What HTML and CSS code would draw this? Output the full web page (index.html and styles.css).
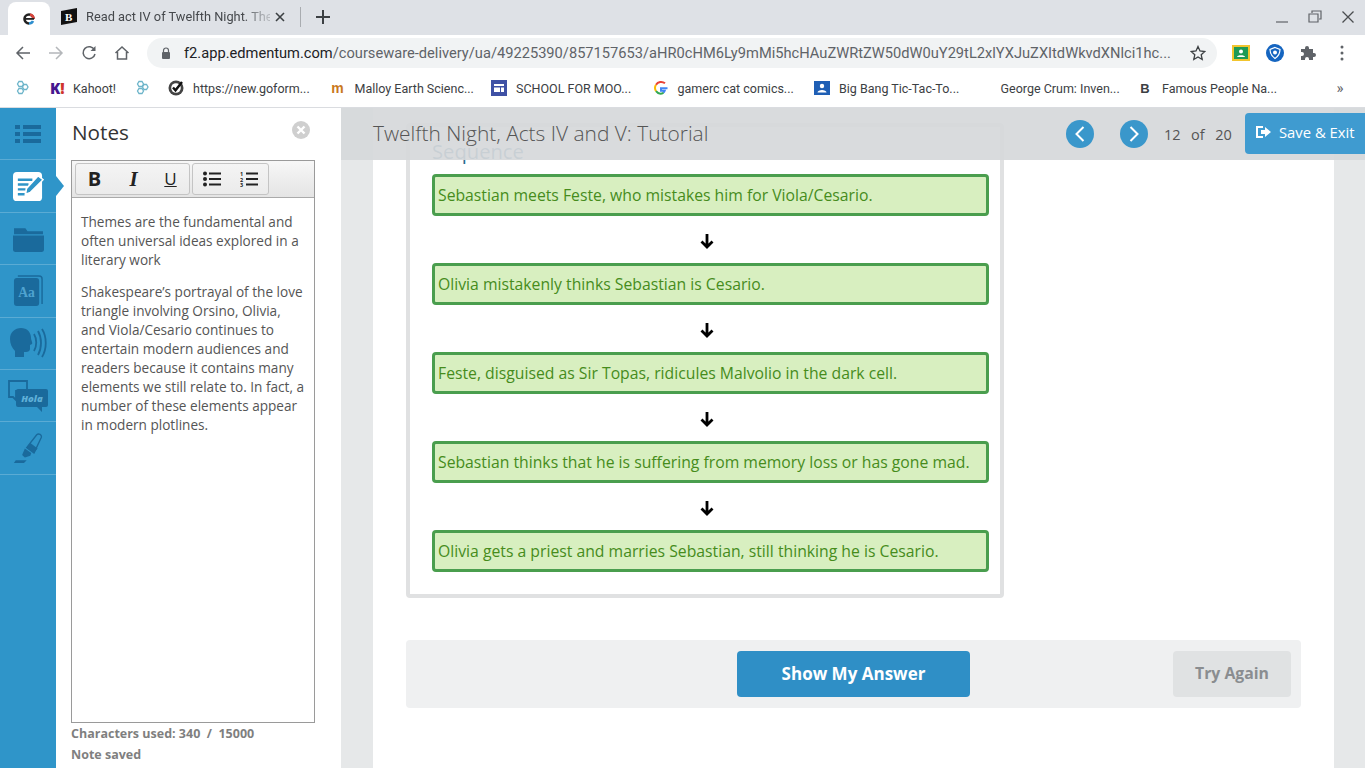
FILE: index.html
```html
<!DOCTYPE html>
<html lang="en">
<head>
<meta charset="utf-8">
<title>Twelfth Night, Acts IV and V: Tutorial</title>
<link rel="stylesheet" href="styles.css">
</head>
<body>
<header class="chrome">
  <div class="tabbar">
    <div class="tab-active">
      <svg class="fav" viewBox="0 0 16 16"><path d="M3.500 8a4.500 4.500 0 0 1 9 0" stroke="#222" stroke-width="2.600" fill="none"/><path d="M9 3.500a4.500 4.500 0 0 1 3.500 4.500" stroke="#d9433a" stroke-width="2.600" fill="none"/><path d="M3.500 8a4.500 4.500 0 0 0 4.500 4.500" stroke="#222" stroke-width="2.600" fill="none"/><path d="M8 12.500a4.500 4.500 0 0 0 4-2.500" stroke="#2f8fcf" stroke-width="2.600" fill="none"/><rect x="4" y="7" width="9" height="1.800" fill="#222"/></svg>
    </div>
    <div class="tab">
      <svg class="fav" viewBox="0 0 18 18"><path d="M1 3 17 0v14L1 17z" fill="#111"/><text x="5" y="13" class="fav-b">B</text></svg>
      <span class="tab-title">Read act IV of Twelfth Night. The</span>
      <svg class="tab-x" viewBox="0 0 10 10"><path d="M1 1l8 8M9 1l-8 8" stroke="#3c4043" stroke-width="1.600"/></svg>
    </div>
    <span class="tab-sep"></span>
    <svg class="tab-plus" viewBox="0 0 14 14"><path d="M7 0v14M0 7h14" stroke="#3c4043" stroke-width="2"/></svg>
    <div class="win">
      <svg viewBox="0 0 14 14"><path d="M1 12h12" stroke="#5f6368" stroke-width="1.200"/></svg>
      <svg viewBox="0 0 14 14"><path d="M4 3V1h9v8h-2M1 4h9v8H1z" stroke="#5f6368" stroke-width="1.200" fill="none"/></svg>
      <svg viewBox="0 0 14 14"><path d="M1.500 1.500l11 11M12.500 1.500l-11 11" stroke="#4a4d50" stroke-width="1.300"/></svg>
    </div>
  </div>
  <div class="toolbar">
    <svg class="tb" viewBox="0 0 16 16"><path d="M15 8H2M8 2 2 8l6 6" stroke="#5f6368" stroke-width="1.500" fill="none"/></svg>
    <svg class="tb" viewBox="0 0 16 16"><path d="M1 8h13M8 2l6 6-6 6" stroke="#b4b7ba" stroke-width="1.500" fill="none"/></svg>
    <svg class="tb" viewBox="0 0 16 16"><path d="M13.500 5A6 6 0 1 0 14 9" stroke="#5f6368" stroke-width="1.500" fill="none"/><path d="M14.500 1v5h-5z" fill="#5f6368"/></svg>
    <svg class="tb" viewBox="0 0 16 16"><path d="M1.500 8 8 2l6.500 6M3.500 7v7h9V7" stroke="#5f6368" stroke-width="1.500" fill="none"/></svg>
    <div class="omni">
      <svg class="lock" viewBox="0 0 10 12"><path d="M2.500 5V3.500a2.500 2.500 0 0 1 5 0V5" stroke="#5f6368" stroke-width="1.200" fill="none"/><rect x="1" y="5" width="8" height="7" rx="1" fill="#5f6368"/></svg>
      <span class="url"><span class="url-host">f2.app.edmentum.com</span>/courseware-delivery/ua/49225390/857157653/aHR0cHM6Ly9mMi5hcHAuZWRtZW50dW0uY29tL2xlYXJuZXItdWkvdXNlci1hc...</span>
      <svg class="star" viewBox="0 0 16 16"><path d="M8 1.500 10 6l4.800.5-3.600 3.200 1 4.800L8 12l-4.200 2.500 1-4.800L1.200 6.500 6 6z" stroke="#3c4043" stroke-width="1.300" fill="none"/></svg>
    </div>
    <svg class="ext ext-class" viewBox="0 0 18 16"><rect width="18" height="16" fill="#f2c52e"/><rect x="2" y="2" width="14" height="12" fill="#1e9a55"/><circle cx="9" cy="6.500" r="2" fill="#fff"/><path d="M5 12c0-2.500 8-2.500 8 0z" fill="#fff"/></svg>
    <svg class="ext ext-shield" viewBox="0 0 18 18"><circle cx="9" cy="9" r="9" fill="#1565c0"/><path d="M9 3.500 14 5.500c0 4-2 7-5 9-3-2-5-5-5-9z" fill="none" stroke="#fff" stroke-width="1.200"/><circle cx="9" cy="8.500" r="2" fill="#fff"/></svg>
    <svg class="ext ext-puzzle" viewBox="0 0 16 16"><path d="M1 4h4V3a2 2 0 0 1 4 0v1h4v4h1a2 2 0 0 1 0 4h-1v3H9v-1a2 2 0 0 0-4 0v1H1v-4h1a2 2 0 0 0 0-4H1z" fill="#5f6368"/></svg>
    <svg class="ext ext-menu" viewBox="0 0 4 16"><circle cx="2" cy="2" r="1.500" fill="#5f6368"/><circle cx="2" cy="8" r="1.500" fill="#5f6368"/><circle cx="2" cy="14" r="1.500" fill="#5f6368"/></svg>
  </div>
  <nav class="bookmarks">
    <svg class="bm-icon bm-first" viewBox="0 0 16 16"><g fill="none" stroke="#6db5ca" stroke-width="1.300"><path d="M5 1.500h3l1.500 2.500L8 6.500H5L3.500 4z"/><path d="M10 4.500h2.500l1.500 2.500L12.500 9.500H10L8.500 7z"/><path d="M5 8.500h3l1.500 2.500L8 13.500H5L3.500 11z"/></g></svg>
    <div class="bm bm-kahoot"><span class="bm-k">K<span class="bm-bang">!</span></span><span class="bm-label bm-label-tight">Kahoot!</span></div>
    <svg class="bm-icon bm-hex" viewBox="0 0 16 16"><g fill="none" stroke="#6db5ca" stroke-width="1.300"><path d="M5 1.500h3l1.500 2.500L8 6.500H5L3.500 4z"/><path d="M10 4.500h2.500l1.500 2.500L12.500 9.500H10L8.500 7z"/><path d="M5 8.500h3l1.500 2.500L8 13.500H5L3.500 11z"/></g></svg>
    <div class="bm"><svg class="bm-icon" viewBox="0 0 16 16"><circle cx="8" cy="8" r="7.500" fill="#444"/><circle cx="8" cy="8" r="4.800" fill="#fff"/><path d="M5 7.500l2.500 2.800L14 2" stroke="#111" stroke-width="2.400" fill="none"/></svg><span class="bm-label">https://new.goform...</span></div>
    <div class="bm"><span class="bm-mh"><span class="mh-m">m</span></span><span class="bm-label">Malloy Earth Scienc...</span></div>
    <div class="bm"><svg class="bm-icon" viewBox="0 0 16 16"><rect width="16" height="16" fill="#3f51a5"/><path d="M3 4h10v2H3zM3 7.500h6V12H3zM10 7.500h3V12h-3z" fill="#fff"/></svg><span class="bm-label">SCHOOL FOR MOO...</span></div>
    <div class="bm"><svg class="bm-icon" viewBox="0 0 16 16"><path d="M14.500 8.200H8v2.500h3.700a4 4 0 0 1-1.500 2" stroke="#4285f4" stroke-width="2" fill="none"/><path d="M12 3.300A6 6 0 0 0 3 4.800" stroke="#ea4335" stroke-width="2" fill="none"/><path d="M3 4.800a6 6 0 0 0 0 6.400" stroke="#fbbc05" stroke-width="2" fill="none"/><path d="M3 11.200a6 6 0 0 0 7.500 1.700" stroke="#34a853" stroke-width="2" fill="none"/></svg><span class="bm-label">gamerc cat comics...</span></div>
    <div class="bm"><svg class="bm-icon" viewBox="0 0 16 16"><rect width="16" height="14" y="1" fill="#1f5fb5"/><circle cx="8" cy="6" r="2.200" fill="#fff"/><path d="M3.500 12.500c0-3.500 9-3.500 9 0z" fill="#fff"/></svg><span class="bm-label">Big Bang Tic-Tac-To...</span></div>
    <div class="bm"><span class="bm-icon"></span><span class="bm-label">George Crum: Inven...</span></div>
    <div class="bm"><span class="bm-b">B</span><span class="bm-label">Famous People Na...</span></div>
    <span class="bm-more">»</span>
  </nav>
</header>

<div class="app">
  <aside class="rail">
    <div class="rail-item">
      <svg class="rail-icon" viewBox="0 0 26 20"><path d="M0 1h5v4H0zM8 1h18v4H8zM0 8h5v4H0zM8 8h18v4H8zM0 15h5v4H0zM8 15h18v4H8z" fill="#1a6a9c"/></svg>
    </div>
    <div class="rail-item rail-active">
      <svg class="rail-icon-lg" viewBox="0 0 32 32"><rect y="1" width="30" height="30" rx="4" fill="#fff"/><path d="M5 9h15M5 14h11M5 19h8M5 24h7" stroke="#2f95c8" stroke-width="2.500"/><path d="M13 24l1-6L26 5l5 4-13 13z" fill="#2f95c8" stroke="#fff" stroke-width="1.500"/></svg>
    </div>
    <div class="rail-item">
      <svg class="rail-icon-lg" viewBox="0 0 30 26"><path d="M1 3h11l2 3h15v3H1z" fill="#1a6a9c"/><path d="M0 10h30v14a2 2 0 0 1-2 2H2a2 2 0 0 1-2-2z" fill="#1a6a9c"/></svg>
    </div>
    <div class="rail-item">
      <svg class="rail-icon-lg" viewBox="0 0 30 32"><path d="M4 1h22a3 3 0 0 1 3 3v26" fill="none" stroke="#1a6a9c" stroke-width="1.500"/><rect y="3" width="26" height="29" rx="3" fill="#1a6a9c"/><text x="13" y="23" class="book-text">Aa</text></svg>
    </div>
    <div class="rail-item">
      <svg class="rail-icon-xl" viewBox="0 0 38 30"><path d="M1 11C1 4 6 0 12 0s10 4 10 10c0 2 2 5 1 6l-2 1v4c0 2-2 3-4 3h-2v5H6v-6C3 20 1 16 1 11z" fill="#1a6a9c"/><path d="M25 6c3 5 3 12 0 17M29 3c4 7 4 17 0 24M33 1c5 8 5 20 0 28" fill="none" stroke="#1a6a9c" stroke-width="1.800"/></svg>
    </div>
    <div class="rail-item">
      <svg class="rail-icon-xl rail-hola" viewBox="0 0 40 32"><path d="M1 1h18v10H8v9l-3-3H1z" fill="none" stroke="#1a6a9c" stroke-width="1.800"/><path d="M10 9h28a2 2 0 0 1 2 2v14a2 2 0 0 1-2 2h-4v5l-5-5H10a2 2 0 0 1-2-2V11a2 2 0 0 1 2-2z" fill="#1a6a9c"/><text x="24" y="22" class="hola-text">Hola</text></svg>
    </div>
    <div class="rail-item">
      <svg class="rail-icon-lg" viewBox="0 0 32 34"><path d="M0 33h11l3-3H2z" fill="#1a6a9c"/><path d="M12 27l-3-3 3-7 7 5-1 3z" fill="#1a6a9c"/><path d="M14 16 25 2a3 3 0 0 1 5 3L22 22z" fill="none" stroke="#1a6a9c" stroke-width="1.500"/><path d="M14 16l4-5 8 6-4 5z" fill="#1a6a9c"/></svg>
    </div>
  </aside>

  <section class="notes">
    <div class="notes-head">
      <h2 class="notes-title">Notes</h2>
      <svg class="notes-close" viewBox="0 0 18 18"><circle cx="9" cy="9" r="9" fill="#cfcfcf"/><path d="M5.500 5.500l7 7M12.500 5.500l-7 7" stroke="#fff" stroke-width="2.400"/></svg>
    </div>
    <div class="editor">
      <div class="editor-bar">
        <div class="btn-group group-a">
          <span class="ed-btn ed-b">B</span>
          <span class="ed-btn ed-i">I</span>
          <span class="ed-btn ed-u">U</span>
        </div>
        <div class="btn-group group-b">
          <span class="ed-btn"><svg class="ed-svg" viewBox="0 0 18 16"><circle cx="2" cy="2.500" r="2" fill="#222"/><circle cx="2" cy="8" r="2" fill="#222"/><circle cx="2" cy="13.500" r="2" fill="#222"/><path d="M6 2.500h12M6 8h12M6 13.500h12" stroke="#222" stroke-width="1.800"/></svg></span>
          <span class="ed-btn"><svg class="ed-svg" viewBox="0 0 18 16"><text x="0" y="5" class="ol-num">1</text><text x="0" y="10.500" class="ol-num">2</text><text x="0" y="16" class="ol-num">3</text><path d="M6 2.500h12M6 8h12M6 13.500h12" stroke="#222" stroke-width="1.800"/></svg></span>
        </div>
      </div>
      <div class="editor-body">
        <p>Themes are the fundamental and often universal ideas explored in a literary work</p>
        <p>Shakespeare’s portrayal of the love triangle involving Orsino, Olivia, and Viola/Cesario continues to entertain modern audiences and readers because it contains many elements we still relate to. In fact, a number of these elements appear in modern plotlines.</p>
      </div>
    </div>
    <div class="notes-meta">Characters used: 340&nbsp; /&nbsp; 15000</div>
    <div class="notes-meta notes-saved">Note saved</div>
  </section>

  <main class="stage">
    <div class="lesson-bar">
      <h1 class="lesson-title">Twelfth Night, Acts IV and V: Tutorial</h1>
      <div class="lesson-nav">
        <span class="nav-btn"><svg viewBox="0 0 12 18"><path d="M9.500 2 2.500 9l7 7" stroke="#fff" stroke-width="2" fill="none"/></svg></span>
        <span class="nav-btn"><svg viewBox="0 0 12 18"><path d="M2.500 2l7 7-7 7" stroke="#fff" stroke-width="2" fill="none"/></svg></span>
        <span class="pager"><span>12</span><span>of</span><span>20</span></span>
        <span class="save-btn"><svg class="save-icon" viewBox="0 0 16 14"><path d="M1 1h7v2H3v8h5v2H1z" fill="#fff"/><path d="M6 5h4V2l6 5-6 5V9H6z" fill="#fff"/></svg>Save &amp; Exit</span>
      </div>
    </div>
    <div class="sheet">
      <div class="card">
        <h3 class="seq-title">Sequence</h3>
        <div class="seq-item">Sebastian meets Feste, who mistakes him for Viola/Cesario.</div>
        <div class="seq-arrow"><svg viewBox="0 0 14 16"><path d="M7 1v13M1.500 8.500 7 14l5.500-5.500" stroke="#000" stroke-width="2.800" fill="none"/></svg></div>
        <div class="seq-item">Olivia mistakenly thinks Sebastian is Cesario.</div>
        <div class="seq-arrow"><svg viewBox="0 0 14 16"><path d="M7 1v13M1.500 8.500 7 14l5.500-5.500" stroke="#000" stroke-width="2.800" fill="none"/></svg></div>
        <div class="seq-item">Feste, disguised as Sir Topas, ridicules Malvolio in the dark cell.</div>
        <div class="seq-arrow"><svg viewBox="0 0 14 16"><path d="M7 1v13M1.500 8.500 7 14l5.500-5.500" stroke="#000" stroke-width="2.800" fill="none"/></svg></div>
        <div class="seq-item">Sebastian thinks that he is suffering from memory loss or has gone mad.</div>
        <div class="seq-arrow"><svg viewBox="0 0 14 16"><path d="M7 1v13M1.500 8.500 7 14l5.500-5.500" stroke="#000" stroke-width="2.800" fill="none"/></svg></div>
        <div class="seq-item">Olivia gets a priest and marries Sebastian, still thinking he is Cesario.</div>
      </div>
      <div class="actions">
        <button class="btn-show">Show My Answer</button>
        <button class="btn-try">Try Again</button>
      </div>
    </div>
  </main>
</div>
</body>
</html>
```

FILE: styles.css
```css
* { box-sizing: border-box; }
html, body { height: 100%; margin: 0; overflow: hidden; }
body { display: flex; flex-direction: column; font-family: "Open Sans", sans-serif; background: #fff; }
h1, h2, h3, p { margin: 0; font-weight: 400; }

/* browser chrome */
.chrome { flex: none; height: 108px; font-family: Roboto, sans-serif; color: #3c4043; }
.tabbar { height: 35px; padding-bottom: 2px; background: #dee1e6; display: flex; align-items: center; }
.tab-active { width: 42px; height: 33px; margin-left: 8px; margin-top: 2px; background: #fff; border-radius: 8px 8px 0 0; display: flex; align-items: center; justify-content: center; align-self: flex-start; }
.fav { width: 16px; height: 16px; flex: none; }
.fav-b { font: 900 11px "Liberation Serif", serif; fill: #fff; }
.tab { display: flex; align-items: center; width: 240px; padding-left: 10px; }
.tab .fav { width: 18px; height: 18px; }
.tab-title { width: 184px; margin-left: 8px; font-size: 12.800px; white-space: nowrap; overflow: hidden; color: #45484c; -webkit-mask-image: linear-gradient(90deg, #000 85%, rgba(0,0,0,.25) 98%); mask-image: linear-gradient(90deg, #000 85%, rgba(0,0,0,.25) 98%); }
.tab-x { width: 10px; height: 10px; margin-left: 5px; }
.tab-sep { width: 1px; height: 20px; background: #a9acb0; margin-left: 10px; }
.tab-plus { width: 14px; height: 14px; margin-left: 15px; }
.win { margin-left: auto; display: flex; gap: 19px; padding-right: 10px; }
.win svg { width: 14px; height: 14px; }

.toolbar { height: 36px; background: #fff; display: flex; align-items: center; padding-left: 15px; }
.tb { width: 16px; height: 16px; margin-right: 17px; flex: none; }
.omni { width: 1070px; height: 30px; border-radius: 15px; background: #f1f3f4; display: flex; align-items: center; padding-left: 14px; padding-right: 11px; }
.lock { width: 10px; height: 12px; flex: none; }
.url { width: 987px; margin-left: 13px; font-size: 14.670px; color: #5f6368; white-space: nowrap; overflow: hidden; }
.url-host { color: #202124; }
.star { width: 16px; height: 16px; margin-left: auto; flex: none; }
.ext { flex: none; }
.ext-class { width: 18px; height: 16px; margin-left: 15px; }
.ext-shield { width: 18px; height: 18px; margin-left: 16px; }
.ext-puzzle { width: 16px; height: 16px; margin-left: 16px; }
.ext-menu { width: 4px; height: 16px; margin-left: 24px; }

.bookmarks { height: 37px; padding-bottom: 2px; background: #fff; border-bottom: 1px solid #dadce0; display: flex; align-items: center; padding-left: 14px; font-size: 12.500px; }
.bm-icon { width: 16px; height: 16px; flex: none; display: block; }
.bm-first { margin-right: 20px; }
.bm { display: flex; align-items: center; width: 161.500px; flex: none; white-space: nowrap; }
.bm-label { margin-left: 9px; color: #3c4043; }
.bm-label-tight { margin-left: 7px; }
.bm-kahoot { width: 84px; }
.bm-k { width: 16px; min-width: 0; flex: none; font: 800 15px "Open Sans", sans-serif; color: #46178f; white-space: nowrap; }
.bm-bang { color: #d0342c; }
.bm-hex { margin-right: 18px; }
.bm-mh { width: 16px; display: flex; justify-content: center; font: 700 14px "Liberation Sans", sans-serif; }
.mh-m { color: #c9781c; }
.bm-b { width: 16px; text-align: center; font: 700 13px "Liberation Sans", sans-serif; color: #3c4043; }
.bm-more { margin-left: 38px; font-size: 15px; color: #5f6368; }

/* app */
.app { flex: 1; min-height: 0; display: flex; }
.rail { width: 56px; flex: none; background: #2f95c9; }
.rail-item { height: 52.400px; border-bottom: 1px solid #5aabd4; display: flex; align-items: center; justify-content: center; position: relative; }
.rail-icon { width: 26px; height: 20px; }
.rail-icon-lg { width: 31px; height: 31px; }
.rail-icon-xl { width: 38px; height: 32px; }
.rail-hola { width: 40px; }
.rail-active::after { content: ""; position: absolute; left: 56px; top: 16px; border-left: 8px solid #2f95c9; border-top: 10px solid transparent; border-bottom: 10px solid transparent; }
.book-text { font: 700 14px "Liberation Serif", serif; fill: #4fa3d0; text-anchor: middle; }
.hola-text { font: italic 800 9.500px "Open Sans", sans-serif; fill: #5fb0d8; text-anchor: middle; }

.notes { width: 285px; flex: none; padding-left: 15px; background: #fff; display: flex; flex-direction: column; }
.notes-head { height: 52px; display: flex; align-items: flex-start; }
.notes-title { font-size: 20.700px; line-height: 30px; margin-top: 9px; margin-left: 1px; color: #333; }
.notes-close { width: 18px; height: 18px; margin-left: auto; margin-right: 31px; margin-top: 13px; }
.editor { width: 244px; height: 563px; border: 1px solid #9a9a9a; display: flex; flex-direction: column; }
.editor-bar { height: 37px; flex: none; background: linear-gradient(#f7f7f7, #e4e4e4); border-bottom: 1px solid #aaa; display: flex; align-items: flex-start; padding: 2px 0 0 3px; gap: 2px; }
.btn-group { height: 32px; display: flex; border: 1px solid #c4c4c4; border-radius: 3px; background: linear-gradient(#f4f4f4, #ebebeb); }
.group-a { width: 115px; }
.group-b { width: 77px; }
.ed-btn { flex: 1; display: flex; align-items: center; justify-content: center; font-family: "Open Sans", sans-serif; color: #222; }
.ed-b { font-weight: 700; font-size: 20px; padding-right: 2px; line-height: 28px; }
.ed-i { font: italic 700 21px/28px "Liberation Serif", serif; }
.ed-u { font-size: 17px; line-height: 28px; text-decoration: underline; }
.ed-svg { width: 18px; height: 16px; }
.ol-num { font: 700 5.500px "Open Sans", sans-serif; fill: #222; }
.editor-body { flex: 1; padding: 14px 7px 0 9px; font-size: 13.600px; line-height: 19px; color: #555; }
.editor-body p { margin-bottom: 13px; }
.notes-meta { font-size: 12.500px; font-weight: 700; line-height: 20px; color: #7f7f7f; margin-top: 1px; }
.notes-saved { margin-top: 1px; }

/* stage */
.stage { flex: 1; min-width: 0; background: #e6e8e9; position: relative; overflow: hidden; padding-left: 32px; }
.lesson-bar { position: absolute; left: 0; right: 0; top: 0; height: 52px; background: rgba(214, 216, 218, .92); display: flex; align-items: center; padding-left: 32px; z-index: 2; }
.lesson-title { font-size: 20.900px; font-weight: 300; line-height: 28px; margin-top: -3px; color: #555; white-space: nowrap; }
.lesson-nav { margin-left: auto; display: flex; align-items: center; }
.nav-btn { width: 28px; height: 28px; border-radius: 50%; background: #3a97cb; display: flex; align-items: center; justify-content: center; margin-right: 26px; }
.nav-btn svg { width: 12px; height: 18px; }
.pager { display: flex; gap: 10.500px; margin-left: -10px; width: 81px; font-size: 14.500px; color: #555; }
.save-btn { width: 120px; height: 41px; margin-top: -1px; background: #3f9bd0; border-radius: 4px 0 0 4px; color: #fff; font-size: 14.800px; line-height: 20px; display: flex; align-items: center; padding: 0 0 4px 10px; }
.save-icon { width: 16px; height: 14px; margin-right: 8px; }

.sheet { width: 961px; min-height: 100%; background: #fff; padding: 15px 0 0 33px; }
.card { width: 598px; height: 475px; border: 4px solid #e0e1e2; border-radius: 4px; padding: 9px 11px 0 22px; }
.seq-title { font-size: 20.200px; line-height: 30px; margin-bottom: 8.400px; color: #2a6a8f; }
.seq-item { height: 42px; border: 3px solid #4a9e4e; border-radius: 4px; background: #d8efc0; color: #468c1c; font-size: 15.750px; line-height: 36px; padding-left: 3px; white-space: nowrap; }
.seq-arrow { height: 46.900px; display: flex; justify-content: center; padding: 17px 0 0 0; margin-left: -8px; }
.seq-arrow svg { width: 14px; height: 16px; }
.actions { width: 895px; height: 68px; margin-top: 42px; background: #eff0f1; border-radius: 4px; display: flex; align-items: center; padding: 0 10px 0 331px; }
.btn-show, .btn-try { height: 46px; border: 0; border-radius: 4px; font-family: "Open Sans", sans-serif; font-weight: 700; font-size: 17px; padding: 0 0 2px; }
.btn-show { width: 233px; background: #2f8fc6; color: #fff; }
.btn-try { width: 118px; margin-left: auto; background: #e0e2e3; color: #8a8d90; font-size: 15.800px; }
```
